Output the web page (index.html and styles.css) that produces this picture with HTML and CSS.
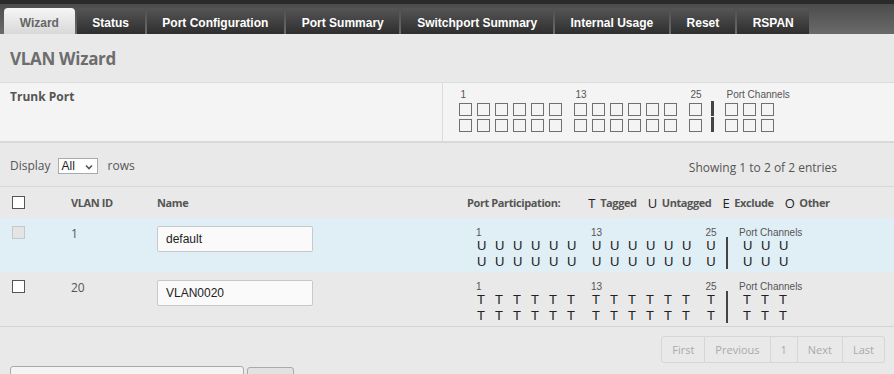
FILE: index.html
```html
<!DOCTYPE html>
<html lang="en">
  <head>
    <title>VLAN Wizard</title>
    <link rel="stylesheet" href="styles.css">
  </head>
  <body>
    <div class="topbar">
      <div class="tab active">Wizard</div>
      <div class="tab">Status</div>
      <div class="tab">Port Configuration</div>
      <div class="tab">Port Summary</div>
      <div class="tab">Switchport Summary</div>
      <div class="tab">Internal Usage</div>
      <div class="tab">Reset</div>
      <div class="tab">RSPAN</div>
    </div>

    <div class="page-title"><h1>VLAN Wizard</h1></div>

    <div class="trunk">
      <div class="trunk-label">Trunk Port</div>
      <div class="trunk-ports">
        <div class="grp">
          <div class="plabel">1</div>
          <div class="brow"><span class="box"></span><span class="box"></span><span class="box"></span><span class="box"></span><span class="box"></span><span class="box"></span></div>
          <div class="brow"><span class="box"></span><span class="box"></span><span class="box"></span><span class="box"></span><span class="box"></span><span class="box"></span></div>
        </div>
        <div class="grp">
          <div class="plabel">13</div>
          <div class="brow"><span class="box"></span><span class="box"></span><span class="box"></span><span class="box"></span><span class="box"></span><span class="box"></span></div>
          <div class="brow"><span class="box"></span><span class="box"></span><span class="box"></span><span class="box"></span><span class="box"></span><span class="box"></span></div>
        </div>
        <div class="grp">
          <div class="plabel">25</div>
          <div class="brow"><span class="box"></span></div>
          <div class="brow"><span class="box"></span></div>
        </div>
        <div class="tsep"><span></span><span></span></div>
        <div class="grp">
          <div class="plabel">Port Channels</div>
          <div class="brow"><span class="box"></span><span class="box"></span><span class="box"></span></div>
          <div class="brow"><span class="box"></span><span class="box"></span><span class="box"></span></div>
        </div>
      </div>
    </div>

    <div class="toolbar">
      <div class="display">
        Display
        <span class="select">All
          <svg width="8" height="6" viewBox="0 0 8 6"><path d="M1 1.5 L4 4.5 L7 1.5" fill="none" stroke="#555" stroke-width="1.6"/></svg>
        </span>
        rows
      </div>
      <div class="info">Showing 1 to 2 of 2 entries</div>
    </div>

    <div class="thead">
      <div><input type="checkbox" class="cb"></div>
      <div>VLAN ID</div>
      <div>Name</div>
      <div class="legend">
        <span class="legend-title">Port Participation:</span>
        <span class="key"><i>T</i>Tagged</span>
        <span class="key"><i>U</i>Untagged</span>
        <span class="key"><i>E</i>Exclude</span>
        <span class="key"><i>O</i>Other</span>
      </div>
    </div>

    <div class="trow selected">
      <div><input type="checkbox" class="cb" disabled></div>
      <div class="vid">1</div>
      <div><input type="text" class="name" value="default"></div>
      <div class="ports">
        <div class="grp">
          <div class="plabel">1</div>
          <div class="prow"><i>U</i><i>U</i><i>U</i><i>U</i><i>U</i><i>U</i></div>
          <div class="prow"><i>U</i><i>U</i><i>U</i><i>U</i><i>U</i><i>U</i></div>
        </div>
        <div class="grp">
          <div class="plabel">13</div>
          <div class="prow"><i>U</i><i>U</i><i>U</i><i>U</i><i>U</i><i>U</i></div>
          <div class="prow"><i>U</i><i>U</i><i>U</i><i>U</i><i>U</i><i>U</i></div>
        </div>
        <div class="grp p25">
          <div class="plabel">25</div>
          <div class="prow"><i>U</i></div>
          <div class="prow"><i>U</i></div>
        </div>
        <div class="psep"></div>
        <div class="grp chan">
          <div class="plabel">Port Channels</div>
          <div class="prow"><i>U</i><i>U</i><i>U</i></div>
          <div class="prow"><i>U</i><i>U</i><i>U</i></div>
        </div>
      </div>
    </div>

    <div class="trow last">
      <div><input type="checkbox" class="cb"></div>
      <div class="vid">20</div>
      <div><input type="text" class="name" value="VLAN0020"></div>
      <div class="ports">
        <div class="grp">
          <div class="plabel">1</div>
          <div class="prow"><i>T</i><i>T</i><i>T</i><i>T</i><i>T</i><i>T</i></div>
          <div class="prow"><i>T</i><i>T</i><i>T</i><i>T</i><i>T</i><i>T</i></div>
        </div>
        <div class="grp">
          <div class="plabel">13</div>
          <div class="prow"><i>T</i><i>T</i><i>T</i><i>T</i><i>T</i><i>T</i></div>
          <div class="prow"><i>T</i><i>T</i><i>T</i><i>T</i><i>T</i><i>T</i></div>
        </div>
        <div class="grp p25">
          <div class="plabel">25</div>
          <div class="prow"><i>T</i></div>
          <div class="prow"><i>T</i></div>
        </div>
        <div class="psep"></div>
        <div class="grp chan">
          <div class="plabel">Port Channels</div>
          <div class="prow"><i>T</i><i>T</i><i>T</i></div>
          <div class="prow"><i>T</i><i>T</i><i>T</i></div>
        </div>
      </div>
    </div>

    <div class="pager">
      <span class="pbtn">First</span><span class="pbtn">Previous</span><span class="pbtn">1</span><span class="pbtn">Next</span><span class="pbtn">Last</span>
    </div>

    <div class="bottom">
      <input type="text" class="wide">
      <button class="btn"></button>
    </div>
  </body>
</html>
```

FILE: styles.css
```css
body {
  margin: 0;
  background-color: #e9e9e9;
  font-family: "Open Sans", sans-serif;
  font-size: 12px;
  color: #555;
}

/* tab strip */
.topbar {
  display: flex;
  gap: 2px;
  height: 26px;
  padding: 4px 0 0 4px;
  border-top: 4px solid #2a2a2a;
  background: linear-gradient(#4c4c4c, #6a6a6a);
}

.tab {
  height: 22px;
  padding: 4px 15.7px 0;
  font: bold 12px "Liberation Sans", Arial, sans-serif;
  line-height: 22px;
  color: #fff;
  background: linear-gradient(#555, #2e2e2e);
  border-radius: 4px 4px 0 0;
}

.tab.active {
  color: #666;
  background: linear-gradient(#f6f6f6, #d8d8d8);
}

.page-title {
  display: flex;
  align-items: center;
  height: 48px;
  padding-left: 10px;
}

.page-title h1 {
  margin: 0;
  font-size: 17px;
  font-weight: bold;
  letter-spacing: -0.3px;
  color: #6d6d6d;
}

/* trunk port panel */
.trunk {
  display: flex;
  height: 58px;
  background-color: #f4f4f4;
  border-top: 1px solid #dcdcdc;
  border-bottom: 2px solid #d9d9d9;
}

.trunk-label {
  width: 432px;
  padding: 7px 0 0 10px;
  line-height: 14px;
  font-weight: bold;
  border-right: 1px solid #dcdcdc;
}

.trunk-ports {
  display: flex;
  gap: 12px;
  padding: 6px 0 0 16px;
}

.plabel {
  height: 12px;
  line-height: 12px;
  font-family: "Liberation Sans", Arial, sans-serif;
  font-size: 10px;
  color: #555;
  white-space: nowrap;
}

.trunk-ports .plabel {
  margin-bottom: 2px;
  padding-left: 1.5px;
}

.brow {
  display: flex;
  gap: 5px;
  margin-bottom: 3px;
}

.box {
  width: 11px;
  height: 11px;
  border: 1px solid #707070;
}

.tsep {
  display: flex;
  flex-direction: column;
  gap: 1px;
  margin: 12px -1px 0 -3px;
}

.tsep span {
  width: 3px;
  height: 15px;
  background-color: #444;
}

/* display / info bar */
.toolbar {
  display: flex;
  justify-content: space-between;
  align-items: center;
  height: 41px;
  padding: 2px 57px 0 10px;
  border-bottom: 1px solid #d9d9d9;
}

.display {
  display: flex;
  align-items: center;
}

.select {
  display: flex;
  align-items: center;
  justify-content: space-between;
  box-sizing: border-box;
  width: 40px;
  height: 16px;
  margin: 0 10px 0 7px;
  padding: 0 4px 0 3px;
  background-color: #fff;
  border: 1px solid #aaa;
  font-family: "Liberation Sans", Arial, sans-serif;
  color: #222;
}

.select svg {
  margin-top: 3px;
}

.info {
  padding-top: 4px;
}

/* table */
.thead, .trow {
  display: grid;
  grid-template-columns: 59px 86px 310px 1fr;
  padding-left: 12px;
}

.thead {
  height: 31px;
  align-items: center;
  font-size: 11px;
  font-weight: bold;
  letter-spacing: -0.4px;
}

.cb {
  appearance: none;
  display: block;
  width: 13px;
  height: 13px;
  margin: 0;
  background-color: #fff;
  border: 1px solid #555;
}

.cb:disabled {
  background-color: #e4e4e4;
  border-color: #c8c8c8;
}

.legend {
  display: flex;
  align-items: center;
}

.legend-title {
  margin-right: 28px;
}

.key {
  display: flex;
  align-items: center;
  margin-right: 11px;
}

.key i {
  font-style: normal;
  font-weight: normal;
  font-size: 13px;
  color: #222;
  margin-right: 5px;
}

.trow {
  height: 46px;
  padding-top: 8px;
}

.trow.selected {
  background-color: #e0eef6;
}

.trow.last {
  border-bottom: 1px solid #d4d4d4;
}

.vid {
  line-height: 16px;
}

.name {
  box-sizing: border-box;
  width: 156px;
  height: 26px;
  padding: 0 8px;
  background-color: #fafafa;
  border: 1px solid #c8c8c8;
  border-radius: 2px;
  font: 12px "Liberation Sans", Arial, sans-serif;
  color: #222;
}

/* port participation */
.ports {
  display: flex;
  padding: 2px 0 0 9px;
}

.ports .plabel {
  height: 10px;
  line-height: 10px;
}

.ports .grp + .grp {
  margin-left: 7px;
}

.prow {
  display: flex;
  height: 16px;
  line-height: 16px;
}

.prow i {
  box-sizing: border-box;
  width: 18px;
  padding-left: 1px;
  font-family: "Liberation Sans", Arial, sans-serif;
  font-style: normal;
  font-size: 13px;
  color: #222;
}

.ports .grp.p25 {
  margin-left: 6px;
  text-align: center;
}

.p25 .prow {
  justify-content: center;
}

.p25 .prow i {
  width: 12px;
  padding-left: 0;
}

.psep {
  width: 2px;
  height: 32px;
  margin: 9px 11px 0 9px;
  background-color: #444;
}

.ports .grp.chan {
  margin-left: 0;
}

.chan .prow {
  padding-left: 3px;
}

/* pager */
.pager {
  display: flex;
  justify-content: flex-end;
  padding: 9px 9px 0 0;
}

.pbtn {
  height: 25px;
  line-height: 25px;
  padding: 0 10px;
  font-size: 11px;
  border: 1px solid #d6d6d6;
  border-left: none;
  color: #aaa;
}

.pbtn:first-child {
  border-left: 1px solid #d6d6d6;
  border-radius: 3px 0 0 3px;
}

.pbtn:last-child {
  border-radius: 0 3px 3px 0;
}

.bottom {
  display: flex;
  align-items: flex-start;
  gap: 3px;
  padding: 3px 0 0 10px;
}

.wide {
  box-sizing: border-box;
  width: 234px;
  height: 24px;
  margin: 0;
  background-color: #f4f4f4;
  border: 1px solid #aaa;
  border-radius: 3px;
}

.btn {
  width: 47px;
  height: 24px;
  margin-top: 1px;
  background-color: #e2e2e2;
  border: 1px solid #aaa;
  border-radius: 3px;
}
```
